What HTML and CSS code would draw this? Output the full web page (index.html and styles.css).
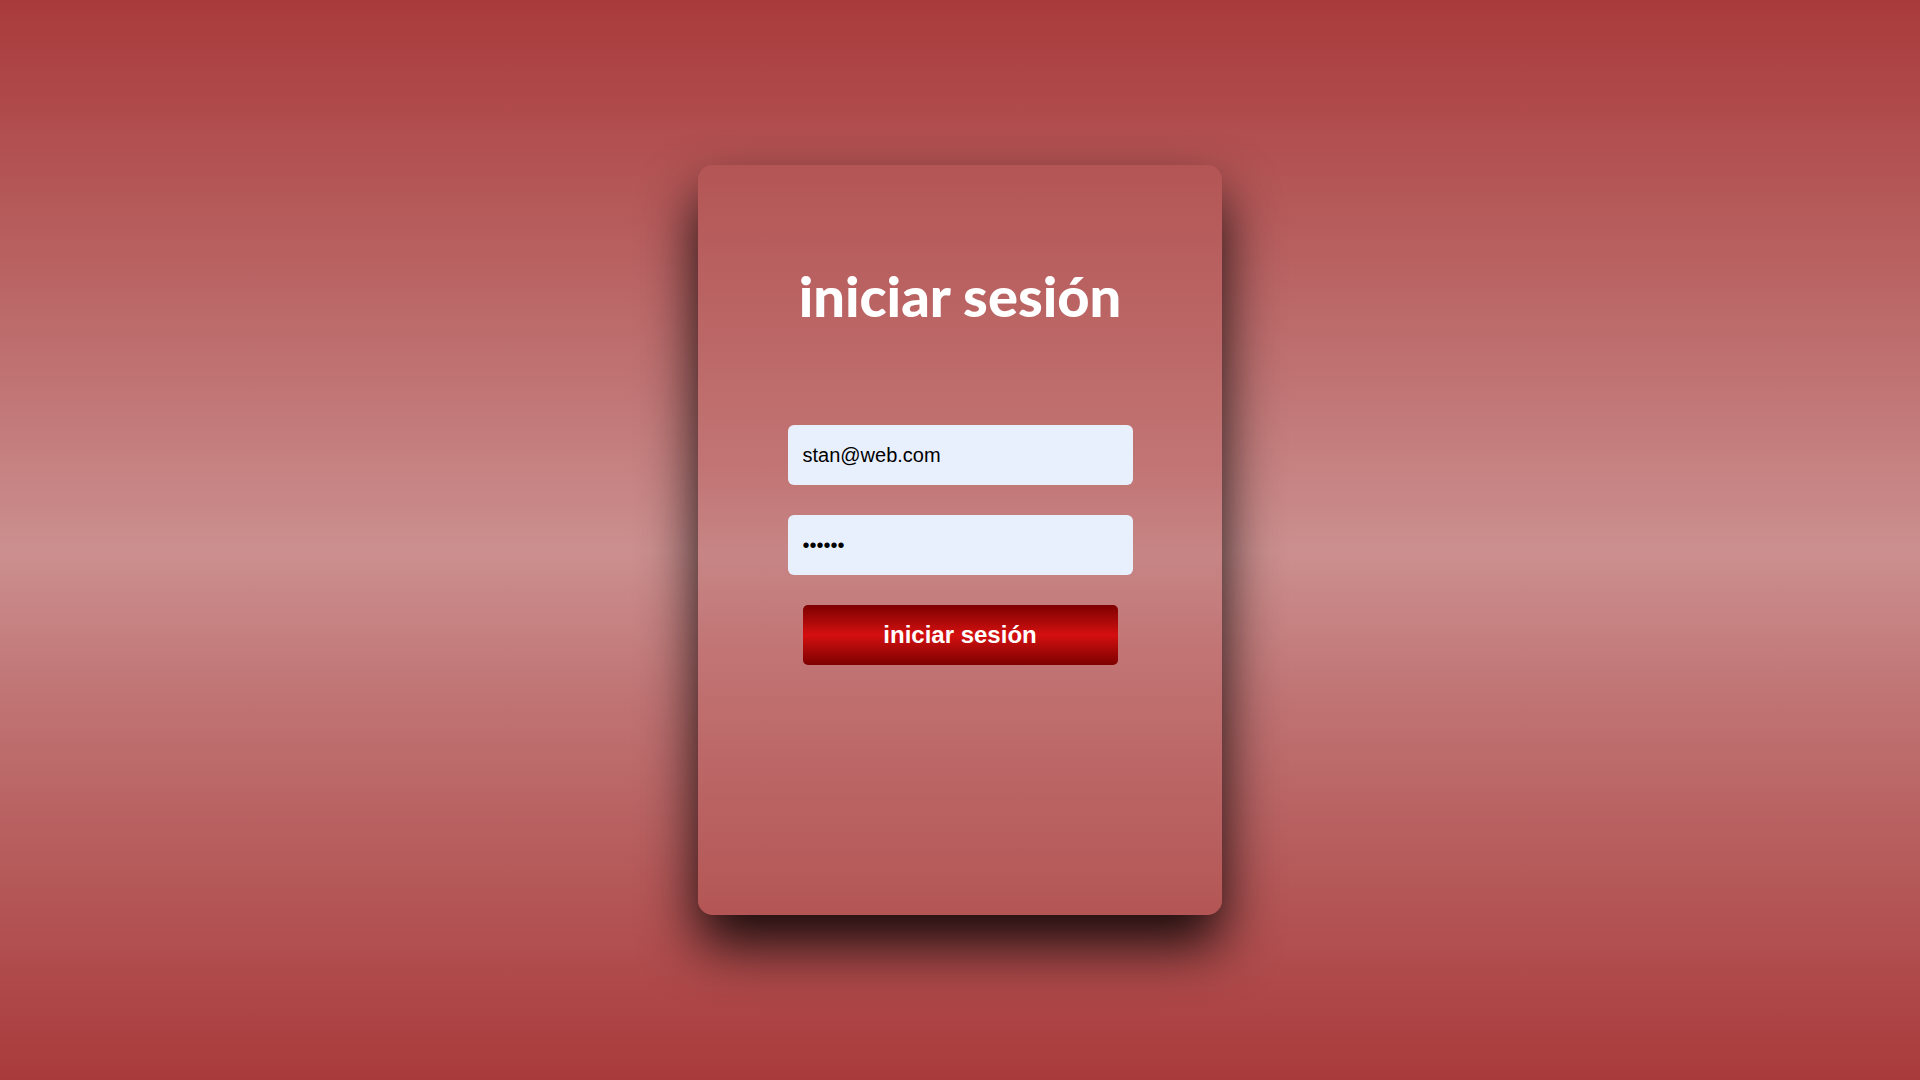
FILE: index.html
```html
<!DOCTYPE html>
<html lang="es">
<head>
<meta charset="utf-8">
<title>iniciar sesión</title>
<link rel="stylesheet" href="styles.css">
</head>
<body>
<main class="page">
  <form class="card">
    <h1 class="title">iniciar sesión</h1>
    <div class="fields">
      <input class="field" type="email" value="stan@web.com">
      <input class="field" type="password" value="123456">
      <button class="btn" type="button">iniciar sesión</button>
    </div>
  </form>
</main>
</body>
</html>
```
FILE: styles.css
```css
html, body {
  margin: 0;
  padding: 0;
  height: 100%;
}
body {
  background: linear-gradient(to bottom, #a93a3b 0%, #c07373 35%, #cc8f8f 51%, #c07373 65%, #a93a3b 100%);
  font-family: "Liberation Sans", Arial, sans-serif;
}
.page {
  height: 1080px;
  display: flex;
  align-items: center;
  justify-content: center;
}
.card {
  width: 524px;
  height: 750px;
  box-sizing: border-box;
  border-radius: 15px;
  background: linear-gradient(to bottom, #b45555 0%, #c27474 40%, #c78585 52%, #c27474 65%, #b45555 100%);
  box-shadow: 0 30px 55px rgba(0, 0, 0, 0.88);
  display: flex;
  flex-direction: column;
  align-items: center;
  padding-top: 91px;
}
.title {
  margin: 0;
  color: #fff;
  font-family: Lato, "Open Sans", sans-serif;
  font-weight: 900;
  font-size: 56px;
  line-height: 80px;
  letter-spacing: 0;
}
.fields {
  margin-top: 89px;
  display: flex;
  flex-direction: column;
  align-items: center;
  gap: 30px;
}
.field {
  width: 345px;
  height: 60px;
  box-sizing: border-box;
  border: none;
  border-radius: 6px;
  background: #e8f0fe;
  padding: 0 15px;
  font-family: "Liberation Sans", Arial, sans-serif;
  font-size: 20px;
  color: #000;
  outline: none;
}
.btn {
  width: 315px;
  height: 60px;
  border: none;
  border-radius: 5px;
  background: linear-gradient(to bottom, #7e0000 0%, #b00a0a 30%, #d60f0f 50%, #b00a0a 70%, #7e0000 100%);
  color: #fff;
  font-family: "Liberation Sans", Arial, sans-serif;
  font-weight: 700;
  font-size: 24px;
  cursor: pointer;
}
```
